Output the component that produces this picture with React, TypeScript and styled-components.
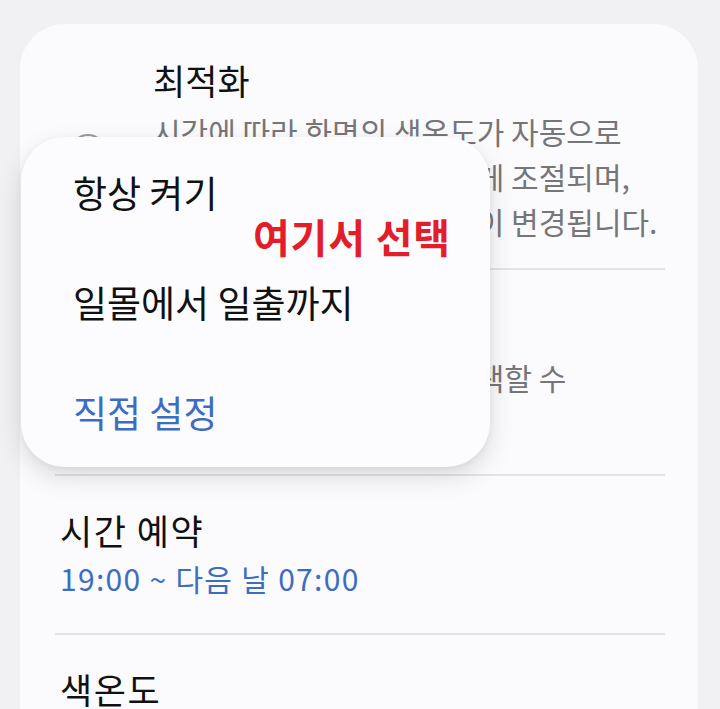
import React from 'react';
import styled, { createGlobalStyle } from 'styled-components';

const GlobalStyle = createGlobalStyle`
  html, body {
    margin: 0;
    padding: 0;
    height: 100%;
    overflow: hidden;
    background: #f1f1f3;
    font-family: "Noto Sans CJK KR", "Noto Sans", sans-serif;
  }
`;

const scheduleOptions = ['항상 켜기', '일몰에서 일출까지', '직접 설정'];

const App: React.FC = () => {
  return (
    <>
      <GlobalStyle />
      <Page>
        <Card>
          <OptionRow $bottom={24}>
            <Radio />
            <OptionText>
              <Title>최적화</Title>
              <Description>
                시간에 따라 화면의 색온도가 자동으로
                <br />
                눈의 피로를 줄이도록 알맞게 조절되며,
                <br />
                밤에는 따뜻한 빛으로 색상이 변경됩니다.
              </Description>
            </OptionText>
          </OptionRow>

          <OptionRow $bottom={29}>
            <Radio />
            <OptionText>
              <Title>사용자 설정</Title>
              <Description>
                원하는 시간과 색온도를 선택할 수
                <br />
                있습니다.
              </Description>
            </OptionText>
          </OptionRow>

          <SettingRow>
            <Title $wide>시간 예약</Title>
            <Value>19:00 ~ 다음 날 07:00</Value>
          </SettingRow>

          <SettingRow>
            <Title $wide>색온도</Title>
          </SettingRow>
        </Card>

        <Menu>
          {scheduleOptions.map((label, i) => (
            <MenuItem key={label} $active={i === scheduleOptions.length - 1}>
              {label}
            </MenuItem>
          ))}
          <Hint>여기서 선택</Hint>
        </Menu>
      </Page>
    </>
  );
};

export default App;

const Page = styled.div`
  position: relative;
  padding: 24px 22px 0 20px;
`;

const Card = styled.div`
  background: #fbfbfd;
  border-radius: 45px;
  padding: 0 33px 0 35px;
  min-height: 760px;
`;

const OptionRow = styled.div<{ $bottom: number }>`
  display: grid;
  grid-template-columns: 98px 1fr;
  align-items: center;
  padding: 35px 0 ${(p) => p.$bottom}px;
  border-bottom: 2px solid #e3e3e5;
`;

const Radio = styled.span`
  box-sizing: border-box;
  width: 36px;
  height: 36px;
  margin-left: 15px;
  border: 2.5px solid #9a9a9c;
  border-radius: 50%;
`;

const OptionText = styled.div`
  display: flex;
  flex-direction: column;
`;

const Title = styled.div<{ $wide?: boolean }>`
  font-size: 35px;
  line-height: 42px;
  letter-spacing: ${(p) => (p.$wide ? '1.5px' : '0')};
  color: #111;
`;

const Description = styled.div`
  margin-top: 8px;
  font-size: 30px;
  line-height: 45px;
  color: #767678;
  white-space: nowrap;
`;

const SettingRow = styled.div`
  display: flex;
  flex-direction: column;
  padding: 33px 0 35px 5px;
  border-bottom: 2px solid #e3e3e5;

  &:last-child {
    border-bottom: none;
  }
`;

const Value = styled.div`
  margin-top: 7px;
  font-size: 30px;
  line-height: 40px;
  letter-spacing: 1.3px;
  color: #3d6dc2;
`;

const Menu = styled.div`
  position: absolute;
  top: 137px;
  left: 21px;
  width: 469px;
  display: flex;
  flex-direction: column;
  background: #fcfcfe;
  border-radius: 44px;
  box-shadow: 0 10px 26px rgba(0, 0, 0, 0.13), 0 2px 6px rgba(0, 0, 0, 0.05);
`;

const MenuItem = styled.div<{ $active?: boolean }>`
  height: 110px;
  display: flex;
  align-items: center;
  padding-left: 52px;
  font-size: 37px;
  color: ${(p) => (p.$active ? '#3d6dc2' : '#111')};
`;

const Hint = styled.span`
  position: absolute;
  left: 232px;
  top: 77px;
  font-size: 40px;
  line-height: 44px;
  font-weight: 700;
  letter-spacing: 0.8px;
  color: #e31e2b;
`;
